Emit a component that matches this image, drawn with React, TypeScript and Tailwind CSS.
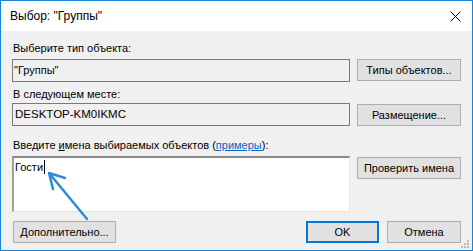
import React from "react";

const btn =
  "h-[22px] bg-[#e1e1e1] border border-[#adadad] text-[11px] text-black flex items-center justify-center leading-none whitespace-nowrap";

export default function App() {
  return (
    <div
      className="w-[473px] h-[251px] border border-[#1883d7] flex flex-col text-black overflow-hidden whitespace-nowrap"
      style={{ fontFamily: '"Liberation Sans", Arial, sans-serif' }}
    >
      <div className="h-[30px] bg-white flex items-center justify-between pl-[9px] pr-[10px] shrink-0">
        <span className="text-[12px]">Выбор: "Группы"</span>
        <svg width="11" height="11" viewBox="0 0 11 11" className="mr-[1px]">
          <path d="M0.5 0.5 L10.5 10.5 M10.5 0.5 L0.5 10.5" stroke="#000" strokeWidth="1" />
        </svg>
      </div>
      <div className="flex-1 bg-[#f0f0f0] px-[11px] pt-[10px] relative">
        <div className="text-[11px] leading-[15px] h-[15px] pl-[1px]">Выберите тип объекта:</div>
        <div className="flex gap-[7px] mt-[3px] items-start">
          <div className="flex-1 h-[23px] border border-[#7a7a7a] flex items-center pl-[1px] text-[11px]">
            "Группы"
          </div>
          <div className={`w-[104px] ${btn}`}>Типы объектов...</div>
        </div>
        <div className="text-[11px] leading-[15px] h-[15px] mt-[5px] pl-[1px]">В следующем месте:</div>
        <div className="flex gap-[7px] mt-[1px] items-start">
          <div className="flex-1 h-[23px] border border-[#7a7a7a] flex items-center pl-[2px] text-[11.5px]">
            DESKTOP-KM0IKMC
          </div>
          <div className={`w-[104px] mt-[1px] ${btn}`}>Размещение...</div>
        </div>
        <div className="text-[11px] leading-[15px] h-[15px] mt-[12px] pl-[1px]">
          Введите <span className="underline">и</span>мена выбираемых объектов (
          <span className="text-[#0066cc] underline">примеры</span>):
        </div>
        <div className="flex gap-[7px] mt-[3px] items-start">
          <div className="flex-1 h-[56px] bg-white border-t-2 border-l-2 border-b border-r border-t-[#8a8a8a] border-l-[#a0a0a0] border-b-[#e3e3e3] border-r-[#e3e3e3] pl-[1px] pt-[2px] text-[11px] leading-[15px] flex items-start">
            <span>Гости</span>
            <span className="w-[1px] h-[14px] bg-black ml-[1px]" />
          </div>
          <div className={`w-[104px] mt-[1px] ${btn}`}>Проверить имена</div>
        </div>
        <div className="flex mt-[9px] items-center">
          <div className={`w-[103px] ml-[1px] ${btn}`}>Дополнительно...</div>
          <div className="flex-1" />
          <div className="w-[73px] h-[22px] bg-[#e1e1e1] border-2 border-[#0078d7] text-[11px] flex items-center justify-center">
            OK
          </div>
          <div className={`w-[74px] ml-[8px] ${btn}`}>Отмена</div>
        </div>
        <svg width="8" height="8" viewBox="0 0 8 8" className="absolute right-[3px] bottom-[2px]">
          <rect x="6" y="0" width="2" height="2" fill="#b8b8b8" />
          <rect x="3" y="3" width="2" height="2" fill="#b8b8b8" />
          <rect x="6" y="3" width="2" height="2" fill="#b8b8b8" />
          <rect x="0" y="6" width="2" height="2" fill="#b8b8b8" />
          <rect x="3" y="6" width="2" height="2" fill="#b8b8b8" />
          <rect x="6" y="6" width="2" height="2" fill="#b8b8b8" />
        </svg>
      </div>
      <svg
        width="473"
        height="251"
        viewBox="0 0 473 251"
        className="absolute left-0 top-0 pointer-events-none"
      >
        <path
          d="M87 219 L49 173 M49 173 L65 178 M49 173 L53 189"
          stroke="#2f8ad8"
          strokeWidth="2.5"
          strokeLinecap="round"
          fill="none"
        />
      </svg>
    </div>
  );
}
